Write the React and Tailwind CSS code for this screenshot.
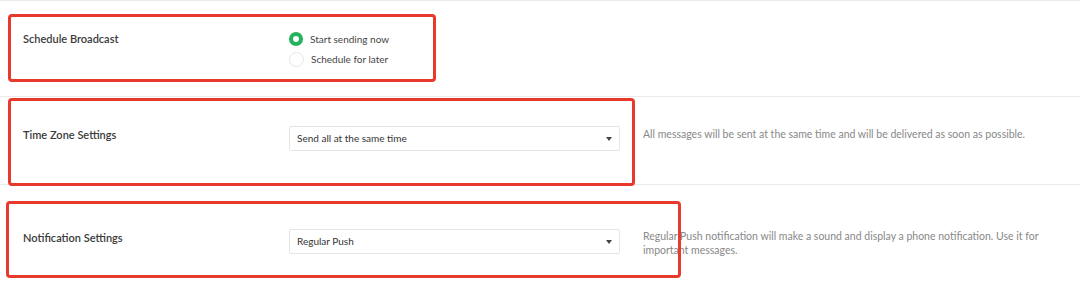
import React from 'react';

function Caret() {
    return (
        <svg width="6" height="4" viewBox="0 0 6 4" className="shrink-0">
            <path d="M0 0 L6 0 L3 4 Z" fill="#444" />
        </svg>
    );
}

function Select({ value }) {
    return (
        <div className="w-[331px] h-[25px] shrink-0 border border-[#e6e6e6] rounded-[2px] bg-white flex items-center justify-between pl-[7px] pr-[7px] text-[10px] text-[#333]">
            <span>{value}</span>
            <Caret />
        </div>
    );
}

function Radio({ checked, label }) {
    return (
        <div className="flex items-center gap-[7px] h-[20px]">
            {checked ? (
                <span className="w-[14px] h-[14px] rounded-full bg-[#22b35e] flex items-center justify-center">
                    <span className="w-[6px] h-[6px] rounded-full bg-white" />
                </span>
            ) : (
                <span className="w-[15px] h-[15px] rounded-full border border-[#e6e6e6] bg-white" />
            )}
            <span className="text-[10px] text-[#444]">{label}</span>
        </div>
    );
}

export default function App() {
    return (
        <div className="relative w-[1080px] h-[283px] bg-white overflow-hidden border-t border-[#ebebeb]" style={{ fontFamily: 'Lato, "Open Sans", sans-serif' }}>
            {/* Schedule */}
            <div className="h-[96px] flex items-start pl-[23px] pt-[31px] border-b border-[#ebebeb]">
                <div className="w-[266px] text-[11px] font-semibold text-[#3a3a3a] leading-[14px]">Schedule Broadcast</div>
                <div className="flex flex-col -mt-[3px]">
                    <Radio checked label="Start sending now" />
                    <Radio label="Schedule for later" />
                </div>
            </div>

            {/* Time zone */}
            <div className="h-[88px] flex items-start pl-[23px] pt-[29px] border-b border-[#ebebeb]">
                <div className="w-[266px] text-[11px] font-semibold text-[#3a3a3a] leading-[14px] mt-[2px]">Time Zone Settings</div>
                <Select value="Send all at the same time" />
                <div className="ml-[23px] text-[10.5px] text-[#888] leading-[14px] mt-[1px]">
                    All messages will be sent at the same time and will be delivered as soon as possible.
                </div>
            </div>

            {/* Notification */}
            <div className="flex items-start pl-[23px] pt-[44px]">
                <div className="w-[266px] text-[11px] font-semibold text-[#3a3a3a] leading-[14px] mt-[2px]">Notification Settings</div>
                <Select value="Regular Push" />
                <div className="ml-[23px] w-[410px] text-[10.5px] text-[#888] leading-[14px]">
                    Regular Push notification will make a sound and display a phone notification. Use it for important messages.
                </div>
            </div>

            {/* annotation boxes */}
            <div className="absolute left-[8px] top-[13px] w-[428px] h-[68px] border-[3px] border-[#e8392d] rounded-[4px] pointer-events-none" />
            <div className="absolute left-[8px] top-[97px] w-[627px] h-[88px] border-[3px] border-[#e8392d] rounded-[4px] pointer-events-none" />
            <div className="absolute left-[6px] top-[200px] w-[675px] h-[77px] border-[3px] border-[#e8392d] rounded-[4px] pointer-events-none" />
        </div>
    );
}
